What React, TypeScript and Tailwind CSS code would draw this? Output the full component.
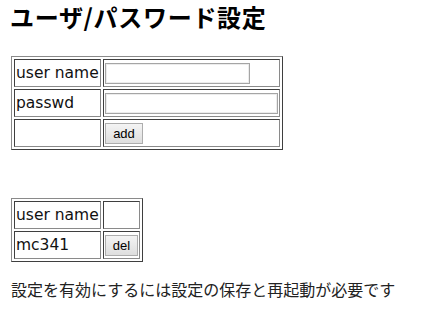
import React from 'react';

const cellBorder = 'border border-t-[#3f3f3f] border-l-[#3f3f3f] border-b-[#8a8a8a] border-r-[#8a8a8a] p-px align-middle';
const tableBorder = 'border-separate border-spacing-[2px] border border-t-[#8a8a8a] border-l-[#8a8a8a] border-b-[#3f3f3f] border-r-[#3f3f3f]';

function Btn({ label, w }: { label: string; w: string }) {
  return (
    <button
      className={`${w} h-[21px] border border-[#adadad] bg-gradient-to-b from-[#f4f4f4] to-[#dedede] font-['Liberation_Sans',sans-serif] text-[13px] leading-none text-black`}
    >
      {label}
    </button>
  );
}

function Label({ text }: { text: string }) {
  return (
    <div className="w-[83px] h-6 leading-6 whitespace-nowrap text-[15.5px] text-[#111]">{text}</div>
  );
}

export default function App() {
  const users = ['mc341'];

  return (
    <div className="w-[427px] h-[309px] bg-white pl-[11px] font-['DejaVu_Sans','Noto_Sans_CJK_JP',sans-serif] text-black">
      <h2 className="h-[34px] leading-[34px] text-[24px] tracking-[0.7px] font-bold font-['Noto_Sans_CJK_JP',sans-serif] -ml-px">
        ユーザ/パスワード設定
      </h2>

      {/* add user */}
      <table className={`mt-[22px] ${tableBorder}`}>
        <tbody>
          <tr>
            <td className={cellBorder}><Label text="user name" /></td>
            <td className={cellBorder}>
              <div className="w-[173px] h-6 flex items-center">
                <input type="text" className="w-[145px] h-[21px] border border-[#a5a5a5] shadow-[inset_0_0_0_1px_#ececec] bg-white" />
              </div>
            </td>
          </tr>
          <tr>
            <td className={cellBorder}><Label text="passwd" /></td>
            <td className={cellBorder}>
              <div className="w-[173px] h-6 flex items-center">
                <input type="password" className="w-[173px] h-[21px] border border-[#a5a5a5] shadow-[inset_0_0_0_1px_#ececec] bg-white" />
              </div>
            </td>
          </tr>
          <tr>
            <td className={cellBorder}><div className="w-[83px] h-6" /></td>
            <td className={cellBorder}>
              <div className="w-[173px] h-6 flex items-center">
                <Btn label="add" w="w-[38px]" />
              </div>
            </td>
          </tr>
        </tbody>
      </table>

      {/* user list */}
      <table className={`mt-[48px] ${tableBorder}`}>
        <tbody>
          <tr>
            <td className={cellBorder}><Label text="user name" /></td>
            <td className={cellBorder}><div className="w-[33px] h-6" /></td>
          </tr>
          {users.map((u) => (
            <tr key={u}>
              <td className={cellBorder}><Label text={u} /></td>
              <td className={cellBorder}>
                <div className="w-[33px] h-6 flex items-center">
                  <Btn label="del" w="w-[33px]" />
                </div>
              </td>
            </tr>
          ))}
        </tbody>
      </table>

      <p className="mt-[15px] h-6 leading-6 text-[16px] text-[#222] font-['Noto_Sans_CJK_JP',sans-serif]">
        設定を有効にするには設定の保存と再起動が必要です
      </p>
    </div>
  );
}
